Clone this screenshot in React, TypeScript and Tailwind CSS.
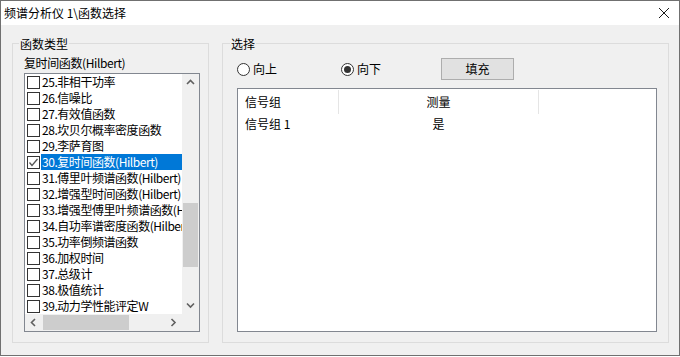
import React from "react";

const items = [
  "25.非相干功率",
  "26.信噪比",
  "27.有效值函数",
  "28.坎贝尔概率密度函数",
  "29.李萨育图",
  "30.复时间函数(Hilbert)",
  "31.傅里叶频谱函数(Hilbert)",
  "32.增强型时间函数(Hilbert)",
  "33.增强型傅里叶频谱函数(Hilbert)",
  "34.自功率谱密度函数(Hilbert)",
  "35.功率倒频谱函数",
  "36.加权时间",
  "37.总级计",
  "38.极值统计",
  "39.动力学性能评定W",
];

const SELECTED = 5;

function Chevron({ dir }: { dir: "up" | "down" | "left" | "right" }) {
  const pts = {
    up: "1,5 4.5,1.5 8,5",
    down: "1,1.5 4.5,5 8,1.5",
    left: "5,1 1.5,4.5 5,8",
    right: "1.5,1 5,4.5 1.5,8",
  }[dir];
  const vertical = dir === "up" || dir === "down";
  return (
    <svg
      width={vertical ? 9 : 7}
      height={vertical ? 7 : 9}
      viewBox={vertical ? "0 0 9 7" : "0 0 7 9"}
      fill="none"
      stroke="#606060"
      strokeWidth="1.6"
    >
      <polyline points={pts} />
    </svg>
  );
}

function CheckBox({ checked }: { checked?: boolean }) {
  return (
    <div className="w-[13px] h-[13px] shrink-0 border border-[#333333] bg-white flex items-center justify-center">
      {checked && (
        <svg width="11" height="11" viewBox="0 0 11 11" fill="none" stroke="#555555" strokeWidth="1.3">
          <polyline points="1.5,5.5 4,8.5 9.5,2" />
        </svg>
      )}
    </div>
  );
}

function Radio({ checked, label }: { checked?: boolean; label: string }) {
  return (
    <div className="flex items-center">
      <div className="w-[13px] h-[13px] rounded-full border border-[#333333] bg-white flex items-center justify-center">
        {checked && <div className="w-[7px] h-[7px] rounded-full bg-[#333333]" />}
      </div>
      <span className="ml-[3px] leading-[16px]">{label}</span>
    </div>
  );
}

export default function App() {
  return (
    <div className="w-[680px] h-[357px] bg-white font-['Noto_Sans_CJK_SC',sans-serif] text-[12px] text-black">
      <div className="h-[356px] border border-[#707070] flex flex-col">
        {/* title bar */}
        <div className="h-[24px] bg-white flex items-center justify-between pl-[3px] pr-[10px]">
          <span className="leading-[16px]">频谱分析仪 1\函数选择</span>
          <svg width="10" height="10" viewBox="0 0 10 10" stroke="#1a1a1a" strokeWidth="1">
            <line x1="0" y1="0" x2="10" y2="10" />
            <line x1="10" y1="0" x2="0" y2="10" />
          </svg>
        </div>

        <div className="flex-1 bg-[#f0f0f0] flex pl-[11px] pt-[18px] gap-[13px]">
          {/* 函数类型 */}
          <div className="relative w-[197px] h-[300px] border border-[#dcdcdc] pl-[11px] pt-[11px]">
            <span className="absolute left-[6px] top-[-8px] px-[1px] bg-[#f0f0f0] leading-[16px]">函数类型</span>
            <div className="leading-[16px] h-[16px] tracking-[-0.4px]">复时间函数(Hilbert)</div>
            <div className="mt-[2px] w-[176px] h-[259px] border border-[#828790] bg-white flex flex-col">
              <div className="flex h-[240px]">
                <div className="w-[157px] overflow-hidden tracking-[-0.45px]">
                  {items.map((t, i) => (
                    <div key={t} className="h-[16px] flex items-center pl-[2px] whitespace-nowrap">
                      <CheckBox checked={i === SELECTED} />
                      <span
                        className={
                          i === SELECTED
                            ? "ml-[1px] pl-[1px] flex-1 h-[16px] leading-[16px] bg-[#0078d7] text-white"
                            : "ml-[1px] pl-[1px] leading-[16px]"
                        }
                      >
                        {t}
                      </span>
                    </div>
                  ))}
                </div>
                <div className="w-[17px] bg-[#f0f0f0] flex flex-col">
                  <div className="h-[17px] flex items-center justify-center">
                    <Chevron dir="up" />
                  </div>
                  <div className="h-[112px]" />
                  <div className="h-[64px] mx-[1px] bg-[#cdcdcd]" />
                  <div className="flex-1" />
                  <div className="h-[17px] flex items-center justify-center">
                    <Chevron dir="down" />
                  </div>
                </div>
              </div>
              <div className="flex h-[17px] bg-[#f0f0f0]">
                <div className="w-[157px] flex items-center">
                  <div className="w-[17px] h-[17px] flex items-center justify-center">
                    <Chevron dir="left" />
                  </div>
                  <div className="ml-[1px] w-[86px] h-[15px] bg-[#cdcdcd]" />
                  <div className="flex-1" />
                  <div className="w-[17px] h-[17px] flex items-center justify-center">
                    <Chevron dir="right" />
                  </div>
                </div>
                <div className="w-[17px]" />
              </div>
            </div>
          </div>

          {/* 选择 */}
          <div className="relative w-[447px] h-[300px] border border-[#dcdcdc] pl-[14px] pt-[14px]">
            <span className="absolute left-[7px] top-[-8px] px-[1px] bg-[#f0f0f0] leading-[16px]">选择</span>
            <div className="flex items-center h-[22px]">
              <div className="w-[104px]">
                <Radio label="向上" />
              </div>
              <div className="w-[100px]">
                <Radio checked label="向下" />
              </div>
              <div className="w-[73px] h-[22px] bg-[#e1e1e1] border border-[#adadad] flex items-center justify-center">
                填充
              </div>
            </div>
            <div className="mt-[8px] w-[420px] h-[244px] border border-[#828790] bg-white">
              <div className="flex h-[25px] items-center">
                <div className="w-[100px] pl-[7px] leading-[16px]">信号组</div>
                <div className="w-[1px] h-[24px] bg-[#e5e5e5]" />
                <div className="w-[199px] text-center leading-[16px]">测量</div>
                <div className="w-[1px] h-[24px] bg-[#e5e5e5]" />
              </div>
              <div className="flex h-[20px] items-center">
                <div className="w-[101px] pl-[7px] leading-[16px]">信号组 1</div>
                <div className="w-[199px] text-center leading-[16px]">是</div>
              </div>
            </div>
          </div>
        </div>
      </div>
    </div>
  );
}
